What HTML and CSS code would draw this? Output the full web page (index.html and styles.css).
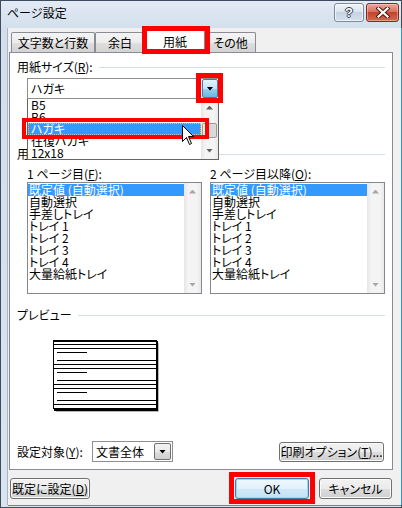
FILE: index.html
```html
<!DOCTYPE html>
<html lang="ja">
<head>
<meta charset="utf-8">
<title>ページ設定</title>
<link rel="stylesheet" href="styles.css">
</head>
<body>
<div class="window">
  <div class="titlebar">
    <span class="title">ページ設定</span>
    <div class="caption">
      <span class="cap cap-help">?</span>
      <span class="cap cap-close"><svg width="14" height="11" viewBox="0 0 14 11"><path d="M2.5 1.5L11.5 9.5M11.5 1.5L2.5 9.5" stroke="#4a1a12" stroke-width="4.2" stroke-linecap="square"/><path d="M2.5 1.5L11.5 9.5M11.5 1.5L2.5 9.5" stroke="#fff" stroke-width="2.2" stroke-linecap="square"/></svg></span>
    </div>
  </div>
  <div class="frame">
    <div class="client">
      <div class="tabs">
        <div class="tab t1">文字数と行数</div>
        <div class="tab t2">余白</div>
        <div class="tab t3">用紙<span class="mark mark-tab"></span></div>
        <div class="tab t4">その他</div>
      </div>
      <div class="panel">
        <div class="group g-size"><span class="glabel">用紙サイズ(<u>R</u>):</span><span class="rule"></span></div>
        <div class="combo size-combo">
          <span class="combo-text">ハガキ</span>
          <span class="drop drop-hot"><span class="tri"></span><span class="mark mark-drop"></span></span>
          <div class="droplist">
            <div class="dl-items">
              <div class="dl-item">B5</div>
              <div class="dl-item">B6</div>
              <div class="dl-item sel">ハガキ</div>
              <div class="dl-item">往復ハガキ</div>
              <div class="dl-item">12x18</div>
            </div>
            <div class="vscroll dl-scroll">
              <span class="sb-btn"><i class="arr up"></i></span>
              <span class="thumb"></span>
              <span class="sb-btn sb-down"><i class="arr down"></i></span>
            </div>
            <span class="mark mark-item"></span>
            <svg class="cursor" width="13" height="21" viewBox="0 0 13 21"><path d="M0.5 0.5V16.5L4.5 12.5L7.5 19.5L9.5 18.5L6.5 11.5H11.5Z" fill="#fff" stroke="#000"/></svg>
          </div>
        </div>
        <div class="group g-tray"><span class="glabel">用紙トレイ</span><span class="rule"></span></div>
        <div class="trays">
          <div class="tray">
            <div class="tlabel">1 ページ目(<u>F</u>):</div>
            <div class="listbox">
              <div class="lb-items">
                <div class="lb-item sel">既定値 (自動選択)</div>
                <div class="lb-item">自動選択</div>
                <div class="lb-item">手差しトレイ</div>
                <div class="lb-item">トレイ 1</div>
                <div class="lb-item">トレイ 2</div>
                <div class="lb-item">トレイ 3</div>
                <div class="lb-item">トレイ 4</div>
                <div class="lb-item">大量給紙トレイ</div>
              </div>
              <div class="vscroll lb-scroll">
                <span class="sb-btn"><i class="arr up dis"></i></span>
                <span class="sb-btn sb-down"><i class="arr down dis"></i></span>
              </div>
            </div>
          </div>
          <div class="tray">
            <div class="tlabel">2 ページ目以降(<u>O</u>):</div>
            <div class="listbox">
              <div class="lb-items">
                <div class="lb-item sel">既定値 (自動選択)</div>
                <div class="lb-item">自動選択</div>
                <div class="lb-item">手差しトレイ</div>
                <div class="lb-item">トレイ 1</div>
                <div class="lb-item">トレイ 2</div>
                <div class="lb-item">トレイ 3</div>
                <div class="lb-item">トレイ 4</div>
                <div class="lb-item">大量給紙トレイ</div>
              </div>
              <div class="vscroll lb-scroll">
                <span class="sb-btn"><i class="arr up dis"></i></span>
                <span class="sb-btn sb-down"><i class="arr down dis"></i></span>
              </div>
            </div>
          </div>
        </div>
        <div class="group g-prev"><span class="glabel">プレビュー</span><span class="rule"></span></div>
        <div class="preview">
          <svg width="107" height="72" viewBox="0 0 107 72">
            <path d="M105.5 3V71.5H3" stroke="#b8b8b8" fill="none"/>
            <rect x="0.5" y="0.5" width="103" height="68" fill="#fff" stroke="#000"/>
            <path d="M0 1.5H104M104.5 1V70M1 69.5H105M1 70.5H105" stroke="#000"/>
            <path d="M1 4.5H104M1 8.5H104M1 24.5H104M1 28.5H104M1 44.5H104M1 48.5H104M1 64.5H104" stroke="#000"/>
            <path d="M4 12.5H34M4 32.5H34M4 52.5H34" stroke="#000"/>
            <path d="M4 20.5H104M4 40.5H104M4 60.5H104" stroke="#000"/>
          </svg>
        </div>
        <div class="apply">
          <span class="alabel">設定対象(<u>Y</u>):</span>
          <div class="combo apply-combo">
            <span class="combo-text">文書全体</span>
            <span class="drop drop-plain"><span class="tri"></span></span>
          </div>
          <span class="btn print-btn">印刷オプション(<u>T</u>)...</span>
        </div>
      </div>
      <div class="footer">
        <span class="btn b-default">既定に設定(<u>D</u>)</span>
        <span class="btn b-ok">OK<span class="mark mark-ok"></span></span>
        <span class="btn b-cancel">キャンセル</span>
      </div>
    </div>
  </div>
</div>
</body>
</html>
```

FILE: styles.css
```css
* { box-sizing: border-box; }
html, body { margin: 0; padding: 0; }
body {
  width: 402px;
  height: 508px;
  overflow: hidden;
  background: #fff;
  color: #000;
  font-family: "Noto Sans CJK JP", "Noto Sans CJK SC", sans-serif;
  font-size: 12px;
  font-feature-settings: "palt";
}
u { text-decoration: underline; text-underline-offset: 1px; }

.window {
  width: 402px;
  height: 508px;
  border: 1px solid #3e4c5e;
  background: linear-gradient(#e2eaf5, #d2deec 30px, #d9e4f1);
  display: flex;
  flex-direction: column;
}

/* title bar */
.titlebar {
  flex: none;
  height: 27px;
  display: flex;
  align-items: flex-start;
  padding: 0 2px 0 6px;
}
.title {
  margin-top: 4px;
  line-height: 16px;
  font-size: 12px;
  font-feature-settings: normal;
  color: #000;
}
.caption { margin-left: auto; margin-top: 2px; display: flex; gap: 2px; }
.cap {
  height: 19px;
  border-radius: 3px;
  display: flex;
  align-items: center;
  justify-content: center;
}
.cap-help {
  width: 30px;
  border: 1px solid #7a8ba0;
  background: linear-gradient(#f1f5fa, #dbe4ee 45%, #c6d3e3 50%, #d5e0ec);
  box-shadow: inset 0 0 0 1px rgba(255,255,255,0.6);
  color: #fff;
  font-family: "Liberation Sans", sans-serif;
  font-weight: 700;
  font-size: 13px;
  line-height: 1;
  text-shadow: 1px 0 #2e3d50, -1px 0 #2e3d50, 0 1px #2e3d50, 0 -1px #2e3d50;
}
.cap-close {
  width: 33px;
  border: 1px solid #7a2d22;
  background: linear-gradient(#eaa99a, #d6735f 45%, #c4432d 50%, #d26b53);
  box-shadow: inset 0 0 0 1px rgba(255,220,210,0.45);
}

/* frame and client */
.frame {
  flex: 1;
  display: flex;
  padding: 0 1px 2px 7px;
}
.client {
  flex: 1;
  background: #f0f0f0;
  display: flex;
  flex-direction: column;
  padding: 2px 8px 0 1px;
  box-shadow: 1px 0 0 #2f96de, 0 1px 0 #2f96de, -1px 0 0 #a9b5c3;
}

/* tabs */
.tabs {
  flex: none;
  height: 22px;
  display: flex;
  align-items: flex-end;
  padding-left: 2px;
}
.tab {
  height: 20px;
  border: 1px solid #898c95;
  border-bottom: none;
  border-radius: 2px 2px 0 0;
  background: linear-gradient(#f4f4f4, #ececec 50%, #dfdfdf 50%, #d3d3d3);
  display: flex;
  align-items: center;
  justify-content: center;
  line-height: 14px;
  white-space: nowrap;
}
.t1 { width: 84px; }
.t2 { width: 50px; }
.t3 {
  width: 60px;
  height: 23px;
  margin-bottom: -1px;
  background: #fff;
  position: relative;
  z-index: 2;
}
.t4 { width: 51px; }

/* red annotation boxes */
.mark {
  position: absolute;
  border: 5px solid #ff0000;
  pointer-events: none;
  z-index: 8;
}
.mark-tab { left: -4px; top: -5px; width: 68px; height: 28px; }
.mark-drop { left: -7px; top: -7px; width: 27px; height: 30px; }
.mark-item { left: -6px; top: 19px; width: 187px; height: 21px; border-width: 4px; }
.mark-ok { left: -7px; top: -7px; width: 86px; height: 32px; }

/* panel */
.panel {
  flex: none;
  height: 418px;
  border: 1px solid #898c95;
  background: #fff;
  padding: 0 7px;
  display: flex;
  flex-direction: column;
}
.group {
  flex: none;
  display: flex;
  align-items: center;
  gap: 6px;
  height: 14px;
  line-height: 14px;
  white-space: nowrap;
}
.rule { flex: 1; height: 1px; background: #d5dfe5; }
.g-size { margin-top: 7px; }
.g-tray { margin-top: 48px; }
.g-prev { margin-top: 14px; }

/* combo boxes */
.combo {
  flex: none;
  position: relative;
  height: 21px;
  border: 1px solid #8e8f8f;
  background: #fff;
  display: flex;
  align-items: center;
}
.combo-text { flex: 1; padding-left: 3px; line-height: 14px; white-space: nowrap; }
.size-combo { width: 192px; margin: 4px 0 0 10px; z-index: 5; }
.drop {
  position: relative;
  align-self: stretch;
  display: flex;
  align-items: center;
  justify-content: center;
}
.drop-hot {
  width: 16px;
  border: 1px solid #3c7fb1;
  border-radius: 2px;
  background: linear-gradient(#e5f4fc, #c4e5f6 50%, #98d1ef 50%, #6cb6de);
}
.drop-plain {
  width: 17px;
  margin: 1px;
  border: 1px solid #707070;
  border-radius: 2px;
  background: linear-gradient(#f2f2f2, #ebebeb 50%, #dddddd 50%, #cfcfcf);
}
.tri {
  width: 7px;
  height: 4px;
  background: #000;
  clip-path: polygon(0 0, 100% 0, 50% 100%);
}

/* dropdown list */
.droplist {
  position: absolute;
  left: -1px;
  top: 20px;
  width: 192px;
  height: 61px;
  border: 1px solid #646464;
  border-top: none;
  background: #fff;
  display: flex;
  z-index: 5;
}
.dl-items { flex: 1; overflow: hidden; }
.dl-item {
  height: 12px;
  line-height: 12px;
  padding-left: 3px;
  white-space: nowrap;
}
.dl-item.sel {
  background: #3399ff;
  color: #fff;
  outline: 1px dotted #ffb070;
  outline-offset: -1px;
}
.cursor { position: absolute; left: 154px; top: 26px; z-index: 9; }

/* scrollbars */
.vscroll {
  width: 17px;
  flex: none;
  display: flex;
  flex-direction: column;
  background: linear-gradient(to right, #e6e6e6, #f4f4f4 25%, #f4f4f4 75%, #e9e9e9);
}
.sb-btn {
  flex: none;
  height: 17px;
  display: flex;
  align-items: center;
  justify-content: center;
}
.sb-down { margin-top: auto; }
.arr { display: block; width: 7px; height: 4px; background: #606060; }
.arr.dis { background: #a6a6a6; }
.arr.up { clip-path: polygon(50% 0, 100% 100%, 0 100%); }
.arr.down { clip-path: polygon(0 0, 100% 0, 50% 100%); }
.thumb {
  flex: none;
  height: 15px;
  margin: 7px 1px 0;
  border: 1px solid #9b9b9b;
  border-radius: 2px;
  background: linear-gradient(to right, #f2f2f2, #e6e6e6 50%, #d6d6d6 50%, #dcdcdc);
}

/* trays */
.trays {
  flex: none;
  display: grid;
  grid-template-columns: 175px 175px;
  column-gap: 8px;
  margin: 6px 0 0 10px;
}
.tlabel {
  height: 14px;
  line-height: 14px;
  margin-bottom: 1px;
  white-space: nowrap;
}
.listbox {
  height: 112px;
  border: 1px solid #828790;
  background: #fff;
  display: flex;
}
.lb-items { flex: 1; padding-top: 1px; overflow: hidden; }
.lb-item {
  height: 12px;
  line-height: 12px;
  padding-left: 1px;
  white-space: nowrap;
}
.lb-item.sel { background: #3399ff; color: #fff; }

/* preview */
.preview { flex: none; height: 72px; margin: 18px 0 0 36px; }
.preview svg { display: block; }

/* apply row */
.apply {
  flex: none;
  display: flex;
  align-items: center;
  height: 21px;
  margin-top: 29px;
}
.alabel { width: 75px; white-space: nowrap; line-height: 14px; }
.apply-combo { width: 81px; }
.print-btn { margin-left: auto; margin-right: 1px; width: 105px; height: 20px; }

/* buttons */
.btn {
  display: inline-flex;
  align-items: center;
  justify-content: center;
  border: 1px solid #707070;
  border-radius: 3px;
  background: linear-gradient(#f2f2f2, #ebebeb 50%, #dddddd 50%, #cfcfcf);
  box-shadow: inset 0 0 0 1px #fbfbfb;
  line-height: 14px;
  white-space: nowrap;
}
.footer {
  flex: none;
  display: flex;
  align-items: flex-start;
  padding: 8px 1px 0 1px;
}
.footer .btn { height: 21px; }
.b-default { width: 80px; }
.b-ok {
  width: 74px;
  margin-left: auto;
  position: relative;
  border-color: #3c7fb1;
  background: linear-gradient(#eef7fd, #e2f1fb 50%, #d0e9f8 50%, #c2e2f6);
  box-shadow: inset 0 0 0 1px #9fd6f5;
}
.b-cancel { width: 73px; margin-left: 10px; }
```
